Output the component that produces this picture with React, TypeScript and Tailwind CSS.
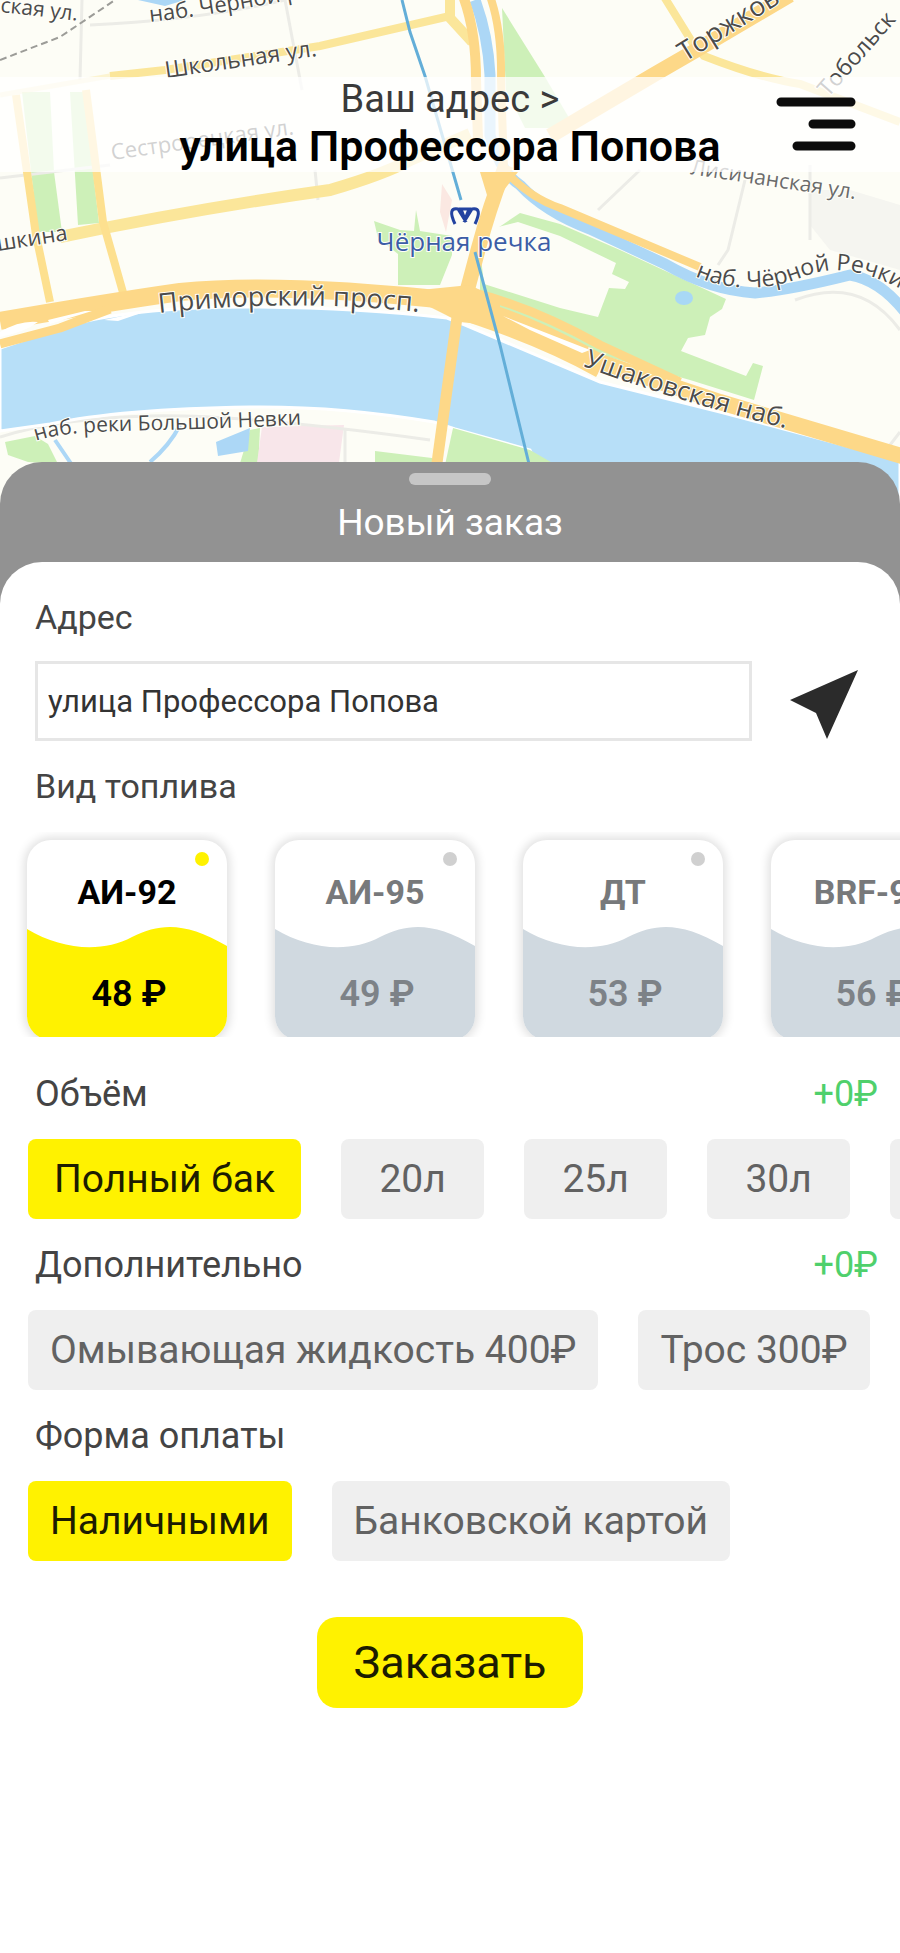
import { useState } from "react";
import clsx from "clsx";

type Fuel = {
  name: string;
  price: number;
};

type ChipProps = {
  label: string;
  active: boolean;
  onClick: () => void;
  className?: string;
};

type SectionTitleProps = {
  title: string;
  extra?: string;
};

type StreetLabel = {
  id: string;
  text: string;
  path: string;
  size: number;
  color?: string;
};

const fuels: Fuel[] = [
  { name: "АИ-92", price: 48 },
  { name: "АИ-95", price: 49 },
  { name: "ДТ", price: 53 },
  { name: "BRF-95", price: 56 },
];

const volumes = ["Полный бак", "20л", "25л", "30л", "35л"];
const extras = ["Омывающая жидкость 400₽", "Трос 300₽"];
const payments = ["Наличными", "Банковской картой"];

const streets: StreetLabel[] = [
  { id: "s1", text: "ская ул.", path: "M0 12 L90 22", size: 21 },
  { id: "s2", text: "наб. Чёрной р", path: "M150 22 Q220 14 300 -2", size: 22 },
  { id: "s3", text: "Школьная ул.", path: "M166 78 L330 54", size: 23 },
  { id: "s4", text: "Сестрорецкая ул.", path: "M112 160 L310 132", size: 22 },
  { id: "s5", text: "шкина", path: "M-2 251 L80 238", size: 22 },
  { id: "s6", text: "Торжков", path: "M685 62 L830 -28", size: 27 },
  { id: "s7", text: "Тобольск", path: "M828 98 L930 -18", size: 23 },
  { id: "s8", text: "Лисичанская ул.", path: "M690 174 L880 203", size: 21, color: "#6b6b6b" },
  { id: "s9", text: "наб. Чёрной Речки", path: "M695 276 C730 292 770 290 800 278 S860 264 925 302", size: 23 },
  { id: "s10", text: "Приморский просп.", path: "M159 313 Q290 298 430 313", size: 27 },
  { id: "s11", text: "Ушаковская наб.", path: "M583 366 Q680 403 810 434", size: 26 },
  { id: "s12", text: "наб. реки Большой Невки", path: "M36 441 C60 432 110 431 160 430 S260 427 330 423", size: 21 },
];

function CityMap() {
  return (
    <svg
      className="absolute inset-0 h-full w-full"
      viewBox="0 0 900 520"
      preserveAspectRatio="xMidYMin slice"
      fontFamily='"Open Sans", "Noto Sans", sans-serif'
      aria-hidden="true"
    >
      <rect width="900" height="520" fill="#fdfdf6" />
      <path d="M810 190 L850 190 L900 205 V270 L830 250 L810 225Z" fill="#f5f5f0" />

      {/* parks */}
      <g fill="#cdf0b8">
        <path d="M502 8 L545 77 L575 128 L525 128 L506 90Z" />
        <path d="M22 92 H50 L54 172 L62 232 H38Z" />
        <path d="M70 92 H84 L93 172 L99 223 L78 225Z" />
        <path d="M374 221 L400 230 L414 231 L416 210 L420 231 L452 236 V255 L440 285 H398 V254 L378 238Z" />
        <path d="M520 213 L560 224 L620 250 L726 299 L722 309 L710 317 L705 335 L688 338 L681 351 L746 376 L753 363 L763 366 L754 400 L690 380 L590 352 L480 298 V240Z" />
        <path d="M5 442 L35 436 L48 444 L58 464 L28 462 L8 455Z" />
        <path d="M375 451 L432 458 V470 H375Z" />
        <path d="M250 430 L260 428 L258 470 H238Z" />
      </g>
      <path d="M478 232 L518 222 L560 236 L616 263 L612 274 L629 282 L625 289 L609 288 L598 317 L560 308 L484 284Z" fill="#fdfdf6" />
      <path d="M262 427 L344 425 L338 470 H256Z" fill="#f8e6ea" />
      <path d="M442 184 L452 200 L446 232 L440 212Z" fill="#fbe8e2" />

      {/* minor streets */}
      <g fill="none" stroke="#ecece7" strokeWidth="3">
        <path d="M82 0 L80 80" />
        <path d="M285 0 L302 90" />
        <path d="M0 178 L110 165 M315 170 L318 200" />
        <path d="M598 210 L640 170 M745 180 L728 250 L718 265 M810 165 V240" />
        <path d="M795 300 Q860 275 900 330 M890 445 L900 432" />
        <path d="M90 25 Q200 20 285 0" />
        <path d="M0 437 Q60 418 150 416 T430 440 M345 430 V465" />
      </g>
      <path d="M0 60 L60 37 L115 0" fill="none" stroke="#9c9c98" strokeWidth="2" strokeDasharray="7 4" />

      {/* water */}
      <path
        d="M0 348 L60 328 Q130 306 260 307 Q360 308 447 318 L465 325 L600 382 L720 412 L900 460 V520 H560 L530 450 L455 429 L434 422 Q340 406 250 407 Q120 409 50 424 L0 431Z"
        fill="#b7dff8"
        stroke="#ffffff"
        strokeWidth="3"
      />
      <path d="M445 465 L453 428 L530 450 L556 465Z" fill="#cdf0b8" />
      <g fill="none" stroke="#acd7f6" strokeLinejoin="round">
        <path d="M475 0 Q488 35 490 75 V135 Q500 172 520 185 Q545 212 590 229 L665 264 Q710 290 755 293 Q790 290 850 275 Q880 280 905 312" strokeWidth="11" />
        <path d="M55 440 L72 465 M180 425 Q170 445 150 462" strokeWidth="4" />
      </g>
      <path d="M216 442 L250 428 L248 451 L218 456Z M138 0 H185 L165 6Z" fill="#acd7f6" />
      <ellipse cx="684" cy="298" rx="9" ry="7" fill="#a8d8f5" />

      {/* yellow roads */}
      <g fill="none" stroke="#fbe69a">
        <path d="M0 95 L110 76" strokeWidth="5" opacity="0.4" />
        <path d="M110 76 L165 70 L320 46 L450 16" strokeWidth="8" />
        <path d="M60 237 Q200 208 330 190 Q385 174 410 160 L470 134" strokeWidth="12" />
        <path d="M663 -5 L694 45 L704 56 Q760 78 800 84 L900 122" strokeWidth="8" />
        <path d="M450 0 L450 18 L472 42" strokeWidth="10" />
      </g>
      <g fill="none" stroke="#fde08f" strokeWidth="8">
        <path d="M16 95 L36 235 L50 302" />
        <path d="M86 90 L103 222 L124 296" />
      </g>

      {/* main roads */}
      <g fill="none" stroke="#fdd888" strokeLinejoin="round">
        <path d="M550 136 L655 74 L700 48 L790 -5" strokeWidth="15" />
        <path d="M463 -4 Q476 30 476 80 L478 140" strokeWidth="10" />
        <path d="M490 -4 Q502 30 501 80 L504 170 Q530 198 560 208 L700 267" strokeWidth="8" />
        <path d="M506 165 Q490 205 478 250 L462 310" strokeWidth="15" />
        <path d="M458 310 L436 470" strokeWidth="11" />
        <path d="M0 321 Q110 302 180 292 Q280 282 455 301" strokeWidth="18" />
        <path d="M0 344 L60 328 L110 309" strokeWidth="9" />
        <path d="M450 302 Q510 312 600 362 L720 402 L905 457" strokeWidth="16" />
        <path d="M470 292 Q530 306 600 345 L680 382" strokeWidth="9" />
        <path d="M450 308 Q540 336 600 370" strokeWidth="16" />
      </g>
      <path d="M480 172 H518 L500 195 L490 205Z M400 292 L470 285 L500 300 L500 326 L460 322Z" fill="#fdd888" />
      <path d="M0 332 Q20 320 38 322 Q25 332 0 337Z M48 320 L85 311 L92 311 L50 324Z M503 316 L590 350 L582 353 L530 330Z M104 320 L150 310 L118 321Z" fill="#fff" />

      {/* metro line */}
      <path d="M402 0 L410 32 L425 76 L461 200 M475 252 L500 345 L530 468" fill="none" stroke="#63aed8" strokeWidth="3" />

      <defs>
        {streets.map((x) => (
          <path key={x.id} id={x.id} d={x.path} />
        ))}
      </defs>
      {streets.map((x) => (
        <text
          key={x.id}
          fontSize={x.size}
          fill={x.color ?? "#4b4b4b"}
          stroke="#fffffa"
          strokeWidth="2"
          paintOrder="stroke"
        >
          <textPath href={`#${x.id}`}>{x.text}</textPath>
        </text>
      ))}
      <path
        d="M455 224 Q447 207 458 209 L466 222 L461 209 H469 L464 222 L472 209 Q483 207 475 224"
        fill="none"
        stroke="#2343a0"
        strokeWidth="3"
      />
      <text
        x="464"
        y="251"
        textAnchor="middle"
        fontSize="26"
        fill="#3c5da6"
        stroke="#fffffa"
        strokeWidth="2"
        paintOrder="stroke"
      >
        Чёрная речка
      </text>
    </svg>
  );
}

function SectionTitle({ title, extra }: SectionTitleProps) {
  return (
    <div className="flex h-[91px] items-center justify-between pl-[35px] pr-[22px] text-[36px] leading-10">
      <h2 className="text-[#444444]">{title}</h2>
      {extra && <span className="text-[#4fd06c]">{extra}</span>}
    </div>
  );
}

function Chip({ label, active, onClick, className = "px-[22px]" }: ChipProps) {
  return (
    <button
      type="button"
      aria-pressed={active}
      onClick={onClick}
      className={clsx(
        "h-20 shrink-0 whitespace-nowrap rounded-lg text-[39px] leading-10",
        active ? "bg-[#fff200] text-[#1c1c00]" : "bg-[#efefef] text-[#626262]",
        className
      )}
    >
      {label}
    </button>
  );
}

function FuelCard({ fuel, active, onClick }: { fuel: Fuel; active: boolean; onClick: () => void }) {
  return (
    <button
      type="button"
      aria-pressed={active}
      onClick={onClick}
      className={clsx(
        "relative flex h-[200px] w-[200px] shrink-0 flex-col items-center overflow-hidden rounded-3xl bg-white pt-8 leading-10 shadow-[0_0_10px_3px_rgba(0,0,0,0.12)]",
        active ? "text-black" : "text-[#77797b]"
      )}
    >
      <svg
        className={clsx("absolute inset-x-0 bottom-0 w-full", active ? "text-[#fff200]" : "text-[#d0d9e0]")}
        viewBox="0 0 200 114"
        fill="currentColor"
        aria-hidden="true"
      >
        <path d="M0 3 C35 24 75 27 105 11 C135 -4 160 -3 200 20 V114 H0Z" />
      </svg>
      <span
        className={clsx(
          "absolute right-[18px] top-3 size-[14px] rounded-full",
          active ? "bg-[#fff200]" : "bg-[#d0d0d0]"
        )}
      ></span>
      <span className="relative text-[34px] font-bold">{fuel.name}</span>
      <span
        className={clsx("relative mt-[62px] pl-1 text-[36px] font-semibold", !active && "text-[#7d8287]")}
      >
        {fuel.price} ₽
      </span>
    </button>
  );
}

export default function App() {
  const [address, setAddress] = useState("улица Профессора Попова");
  const [fuel, setFuel] = useState("АИ-92");
  const [volume, setVolume] = useState("Полный бак");
  const [extra, setExtra] = useState<string[]>([]);
  const [payment, setPayment] = useState("Наличными");

  const toggleExtra = (name: string) =>
    setExtra(extra.includes(name) ? extra.filter((x) => x !== name) : [...extra, name]);

  return (
    <div className="min-h-screen overflow-hidden bg-white font-['Roboto',sans-serif]">
      <div className="relative h-[520px] pt-[77px]">
        <CityMap />
        <header className="relative grid grid-cols-[1fr_auto_1fr] items-center bg-white/75">
          <div className="col-start-2 flex flex-col items-center">
            <a href="#address" className="text-[38px] leading-[44px] text-[#3a3a3a]">
              Ваш адрес &gt;
            </a>
            <h1 className="text-[43px] font-semibold leading-[51px] text-black">{address}</h1>
          </div>
          <button type="button" aria-label="Меню" className="mr-11 justify-self-end">
            <svg width="80" height="56" viewBox="0 0 80 56" stroke="#0c0c0c" strokeWidth="9" strokeLinecap="round">
              <path d="M5 5 H75 M37 27 H75 M21 49 H75" />
            </svg>
          </button>
        </header>
      </div>

      <main className="relative -mt-[58px] rounded-t-[42px] bg-[#929292]">
        <div className="flex h-[100px] flex-col items-center pt-[11px]">
          <div className="h-3 w-[82px] rounded-md bg-[#c6c6c6]"></div>
          <p className="mt-4 text-[37px] leading-[44px] text-white">Новый заказ</p>
        </div>

        <form
          className="flex flex-col rounded-t-[42px] bg-white pb-10 pt-8"
          onSubmit={(e) => e.preventDefault()}
        >
          <label htmlFor="address" className="pl-[35px] text-[34px] leading-[46px] text-[#444444]">
            Адрес
          </label>
          <div className="mt-[21px] flex items-center pl-[35px] pr-[42px]">
            <input
              id="address"
              type="text"
              value={address}
              onChange={(e) => setAddress(e.target.value)}
              className="h-20 min-w-0 flex-1 border-3 border-[#e6e6e6] bg-white px-[10px] text-[31px] text-[#333333] outline-none"
            />
            <button type="button" aria-label="Моё местоположение" className="ml-[38px] mt-2">
              <svg width="68" height="70" viewBox="0 0 68 70" fill="#2b2b2b">
                <path d="M68 0 L0 30 L26 43 L37 69Z" />
              </svg>
            </button>
          </div>

          <h2 className="pl-[35px] text-[34px] leading-[91px] text-[#444444]">Вид топлива</h2>
          <div className="flex h-[205px] gap-12 overflow-hidden pl-[27px] pt-2">
            {fuels.map((x) => (
              <FuelCard key={x.name} fuel={x} active={fuel === x.name} onClick={() => setFuel(x.name)} />
            ))}
          </div>

          <div className="pt-[11px]">
            <SectionTitle title="Объём" extra="+0₽" />
            <div className="flex gap-10 overflow-hidden pl-7">
              {volumes.map((x) => (
                <Chip
                  key={x}
                  label={x}
                  active={volume === x}
                  onClick={() => setVolume(x)}
                  className="min-w-[143px] px-[26px]"
                />
              ))}
            </div>
          </div>

          <SectionTitle title="Дополнительно" extra="+0₽" />
          <div className="flex gap-10 overflow-hidden pl-7">
            {extras.map((x) => (
              <Chip key={x} label={x} active={extra.includes(x)} onClick={() => toggleExtra(x)} />
            ))}
          </div>

          <SectionTitle title="Форма оплаты" />
          <div className="flex gap-10 overflow-hidden pl-7">
            {payments.map((x) => (
              <Chip key={x} label={x} active={payment === x} onClick={() => setPayment(x)} />
            ))}
          </div>

          <button
            type="submit"
            className="mt-14 h-[91px] self-center rounded-[20px] bg-[#fff200] px-9 text-[45px] leading-[48px] text-[#1c1c00]"
          >
            Заказать
          </button>
        </form>
      </main>
    </div>
  );
}
